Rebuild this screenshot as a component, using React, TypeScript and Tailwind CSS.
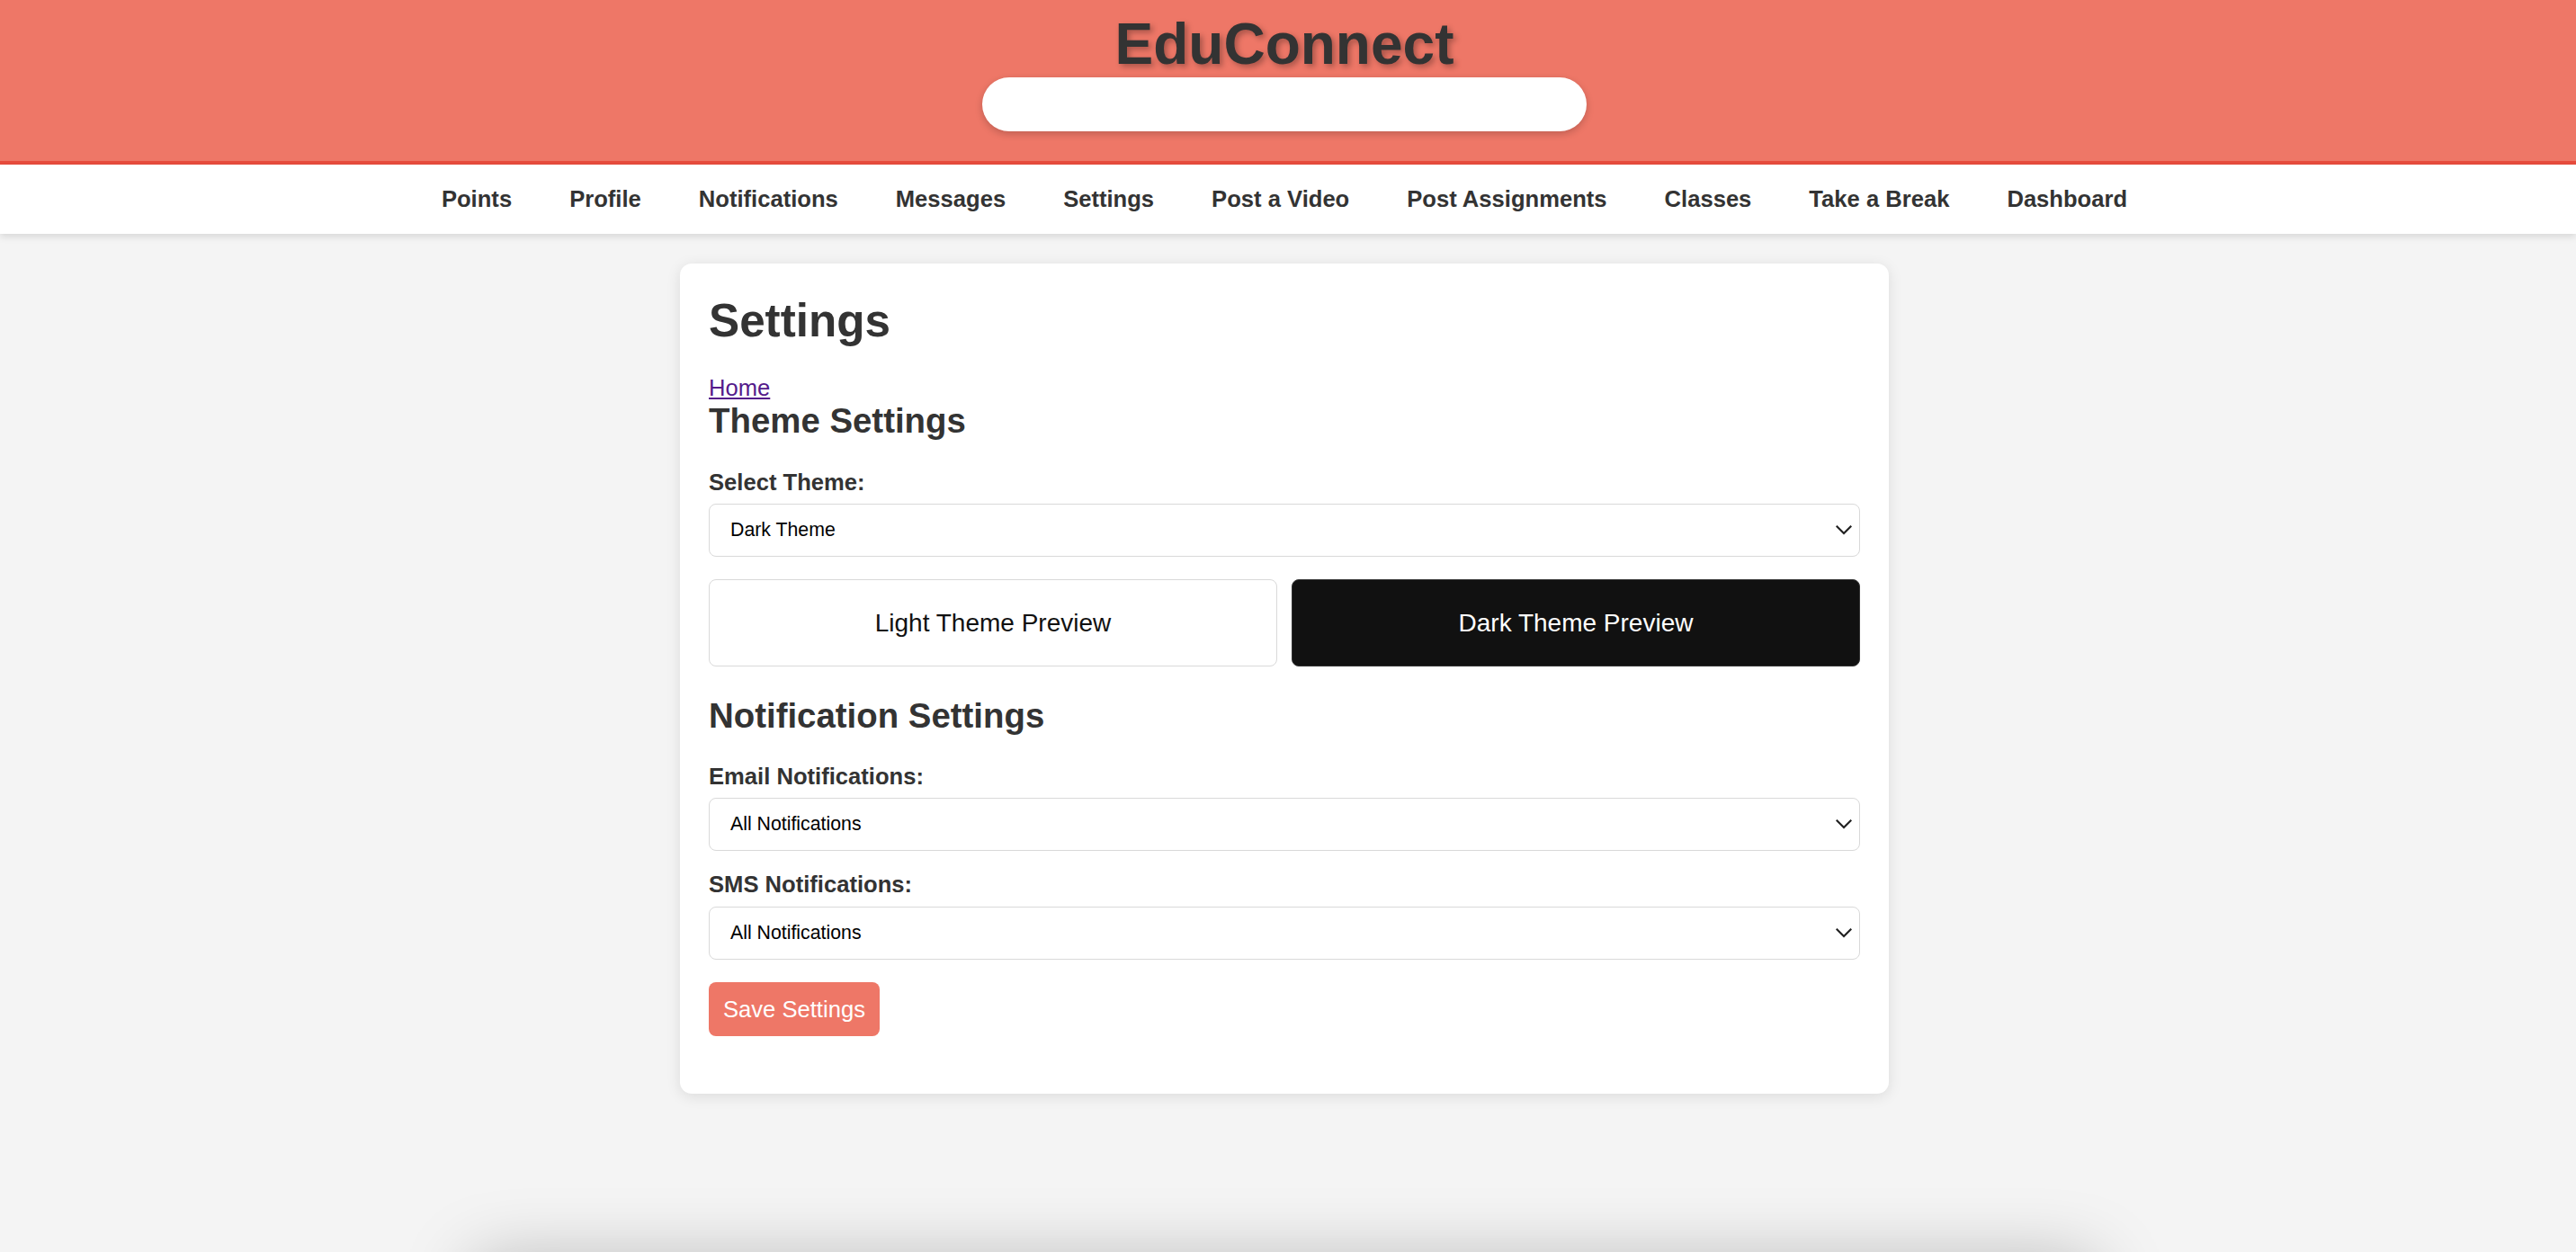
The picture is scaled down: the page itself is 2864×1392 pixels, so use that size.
import type { ReactNode } from 'react'

const navItems = [
  'Points',
  'Profile',
  'Notifications',
  'Messages',
  'Settings',
  'Post a Video',
  'Post Assignments',
  'Classes',
  'Take a Break',
  'Dashboard',
]

function Chevron() {
  return (
    <svg width="18" height="11" viewBox="0 0 18 11" fill="none" className="shrink-0">
      <path d="M1.5 1.5 L9 9 L16.5 1.5" stroke="#222" strokeWidth="2.2" strokeLinecap="square" />
    </svg>
  )
}

function FakeSelect({ value }: { value: string }) {
  return (
    <div className="h-[59px] w-full flex items-center justify-between bg-white border border-[#d9d9d9] rounded-[8px] pl-[23px] pr-[8px]">
      <span className="text-[21.3px] text-black leading-none">{value}</span>
      <Chevron />
    </div>
  )
}

function Label({ children, className }: { children: ReactNode; className: string }) {
  return (
    <label className={`block text-[25.6px] leading-[29px] font-bold text-[#333] ${className}`}>
      {children}
    </label>
  )
}

export default function App() {
  return (
    <div className="h-[1392px] overflow-hidden bg-[#f4f4f4] font-['Liberation_Sans',Arial,sans-serif]">
      <header className="h-[183px] bg-[#ee7767] border-b-4 border-[#e84c3d] flex flex-col items-center pt-[13px] pr-[8px]">
        <h1 className="text-[64px] leading-[73px] font-bold text-[#333] [text-shadow:3px_3px_6px_rgba(0,0,0,0.3)]">
          EduConnect
        </h1>
        <div className="w-[672px] h-[60px] bg-white rounded-full shadow-[0_3px_8px_rgba(0,0,0,0.2)]" />
      </header>

      <nav className="h-[77px] bg-white shadow-[0_3px_8px_rgba(0,0,0,0.12)] flex items-center justify-center gap-[64px] pr-[8px]">
        {navItems.map((item) => (
          <a key={item} className="text-[25.6px] font-bold text-[#333] cursor-pointer">
            {item}
          </a>
        ))}
      </nav>

      <div className="flex justify-center pr-[8px] mt-[33px]">
        <main className="w-[1344px] bg-white rounded-[13px] shadow-[0_3px_16px_rgba(0,0,0,0.1)] px-[32px] pt-[32px] pb-[64px]">
          <h1 className="mt-[2px] text-[51.2px] leading-[59px] font-bold text-[#333]">Settings</h1>
          <a className="block w-fit mt-[31px] text-[25.6px] leading-[29px] text-[#551a8b] underline cursor-pointer">
            Home
          </a>
          <h2 className="text-[38.4px] leading-[44px] font-bold text-[#333]">Theme Settings</h2>

          <Label className="mt-[32px]">Select Theme:</Label>
          <div className="mt-[9px]">
            <FakeSelect value="Dark Theme" />
          </div>

          <div className="mt-[25px] grid grid-cols-2 gap-[16px]">
            <div className="h-[97px] flex items-center justify-center bg-white border border-[#d9d9d9] rounded-[8px] text-[28px] text-[#111]">
              Light Theme Preview
            </div>
            <div className="h-[97px] flex items-center justify-center bg-[#111] border border-[#333] rounded-[8px] text-[28px] text-white">
              Dark Theme Preview
            </div>
          </div>

          <h2 className="mt-[33px] text-[38.4px] leading-[44px] font-bold text-[#333]">
            Notification Settings
          </h2>

          <Label className="mt-[31px]">Email Notifications:</Label>
          <div className="mt-[9px]">
            <FakeSelect value="All Notifications" />
          </div>

          <Label className="mt-[23px]">SMS Notifications:</Label>
          <div className="mt-[10px]">
            <FakeSelect value="All Notifications" />
          </div>

          <button className="mt-[25px] h-[60px] px-[16px] bg-[#ee7767] text-white text-[25.6px] rounded-[8px]">
            Save Settings
          </button>
        </main>
      </div>

      <div className="flex justify-center pr-[8px] mt-[188px]">
        <footer className="w-[1800px] h-[120px] bg-[#f4f4f4] shadow-[0_0_80px_rgba(0,0,0,0.28)]" />
      </div>
    </div>
  )
}
